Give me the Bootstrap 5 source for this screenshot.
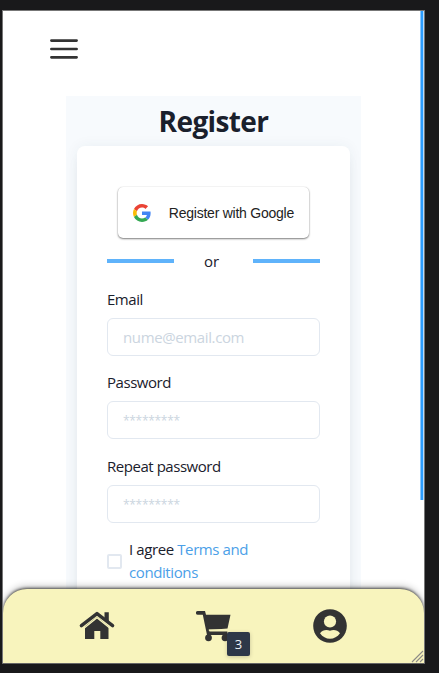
<!DOCTYPE html>
<html lang="en">
<head>
<meta charset="utf-8">
<meta name="viewport" content="width=device-width, initial-scale=1">
<title>Register</title>
<link href="https://cdn.jsdelivr.net/npm/bootstrap@5.3.0/dist/css/bootstrap.min.css" rel="stylesheet">
<style>
html,body{height:100%;overflow:hidden}
body{background:#19191b;font-family:"Open Sans","Noto Sans",sans-serif;font-size:15px;line-height:22.5px;color:#1a202c;padding:10px 14px 9px 2px}
.screen{height:654px;border:1px solid #777;border-bottom-color:#666}
.scroll-thumb{width:4px;height:489px;background:#2b9dff;border-left:1px solid #8cc8ff;border-right:1px solid #b5dcff;top:0;right:0}
.menu-btn{margin:28px 0 0 47px;width:28px;height:20px}
.panel{width:295px;height:620px;margin:37px 0 0 63px;background:#f7fafd}
.panel h1{font-size:28px;line-height:50px;font-weight:700;letter-spacing:-.62px}
.form-box{width:273px;height:560px;padding:41px 30px 0;border-radius:8px;box-shadow:0 10px 15px -3px rgba(0,0,0,.06),0 0 14px rgba(40,60,80,.06)}
.google-btn{width:191px;height:51px;border-radius:5px;font:14px "Liberation Sans",Arial,sans-serif;color:#222;box-shadow:0 1px 2px rgba(0,0,0,.5),0 0 1px rgba(0,0,0,.2);padding:0 15px}
.google-btn span{letter-spacing:-.24px;white-space:nowrap}
.divider{height:22px;margin-top:12px}
.divider i{width:67px;height:4px;background:#5fb3fb}
.divider span{margin-right:4px;letter-spacing:-.2px}
.form-label{margin:0 0 8px;height:22px;line-height:22px;letter-spacing:-.46px}
.field{margin-top:15.6px}
.form-control{height:38px;font-size:15px;padding:4px 15px 4px;border:1px solid #e2e8f0;border-radius:6px;letter-spacing:-.38px}
.form-control::placeholder{color:#cbd5e0;opacity:1}
.form-control[type=password]{font-size:12px;letter-spacing:-.3px;padding-bottom:3px}
.terms{margin-top:15.5px}
.form-check-input{width:15px;height:15px;margin:0;border:2px solid #e2e8f0;border-radius:2px!important}
.terms label{width:140px;margin-left:7px;letter-spacing:-.4px;line-height:23px}
.terms a{color:#4ba0e8}
.tabbar{height:74px;background:#f8f4bd;border-radius:24px 24px 0 0;box-shadow:0 -1px 3px rgba(0,0,0,.65),0 -3px 7px rgba(0,0,0,.22);color:#333}
.tabbar a{color:#333}
.tabbar svg{display:block}
.home-tab{margin-left:76px}
.cart-tab{margin-left:81px}
.user-tab{margin-left:81px}
.count{left:31px;top:22px;width:23px;height:24px;border-radius:2px;background:#2d3748;color:#edf2f7;font-size:13px;line-height:24px;box-shadow:0 1px 4px rgba(0,0,0,.2)}
.grip{right:0;bottom:0}
</style>
<script src="https://cdn.jsdelivr.net/npm/bootstrap@5.3.0/dist/js/bootstrap.bundle.min.js"></script>
</head>
<body>
<main class="screen bg-white position-relative overflow-hidden">
  <div class="d-flex flex-column align-items-start">
    <button class="menu-btn btn p-0 border-0 d-flex" aria-label="Menu">
      <svg width="28" height="20" viewBox="0 0 28 20"><path d="M1.4 1.6h25.2M1.4 10h25.2M1.4 18.3h25.2" stroke="#333" stroke-width="2.7" stroke-linecap="round"/></svg>
    </button>
    <section class="panel d-flex flex-column align-items-center">
      <h1 class="m-0 text-center">Register</h1>
      <form class="form-box bg-white">
        <button type="button" class="google-btn bg-white border-0 d-flex align-items-center mx-auto">
          <svg width="18" height="18" viewBox="0 0 48 48" class="flex-shrink-0"><path fill="#EA4335" d="M24 9.5c3.54 0 6.71 1.22 9.21 3.6l6.85-6.85C35.9 2.38 30.47 0 24 0 14.62 0 6.51 5.38 2.56 13.22l7.98 6.19C12.43 13.72 17.74 9.5 24 9.5z"/><path fill="#4285F4" d="M46.98 24.55c0-1.57-.15-3.09-.38-4.55H24v9.02h12.94c-.58 2.96-2.26 5.48-4.78 7.18l7.73 6c4.51-4.18 7.09-10.36 7.09-17.65z"/><path fill="#FBBC05" d="M10.53 28.59c-.48-1.45-.76-2.99-.76-4.59s.27-3.14.76-4.59l-7.98-6.19C.92 16.46 0 20.12 0 24s.92 7.54 2.56 10.78l7.97-6.19z"/><path fill="#34A853" d="M24 48c6.48 0 11.93-2.13 15.89-5.81l-7.73-6c-2.15 1.45-4.92 2.3-8.16 2.3-6.26 0-11.57-4.22-13.47-9.91l-7.98 6.19C6.51 42.62 14.62 48 24 48z"/></svg>
          <span class="ms-auto">Register with Google</span>
        </button>
        <div class="divider d-flex align-items-center justify-content-between"><i></i><span>or</span><i></i></div>
        <div class="field"><label class="form-label d-block" for="em">Email</label><input id="em" type="email" class="form-control" placeholder="nume@email.com"></div>
        <div class="field"><label class="form-label d-block" for="pw">Password</label><input id="pw" type="password" class="form-control" placeholder="*********"></div>
        <div class="field"><label class="form-label d-block" for="rp">Repeat password</label><input id="rp" type="password" class="form-control" placeholder="*********"></div>
        <div class="terms d-flex align-items-center"><input id="ag" type="checkbox" class="form-check-input flex-shrink-0"><label for="ag">I agree <a href="#" class="text-decoration-none"><span>Terms and</span> <span>conditions</span></a></label></div>
      </form>
    </section>
  </div>
  <div class="scroll-thumb position-absolute"></div>
  <nav class="tabbar position-absolute bottom-0 start-0 end-0 d-flex align-items-center">
    <a href="#" class="home-tab" aria-label="Home"><svg width="36" height="30" viewBox="0 0 36 30"><path fill="#333" d="M6 15.5 18 5.8l11.5 9.7V28H21.3v-8h-6v8H6z"/><path d="M2.4 14.6 18 2.6l15.6 12" fill="none" stroke="#333" stroke-width="3.4" stroke-linecap="round" stroke-linejoin="round"/><path d="M5 17.2 18 6.7l13 10.5" fill="none" stroke="#f8f4bd" stroke-width="1.3"/><path fill="#333" d="M25.5 1.2h4.3v10.2l-4.3-3.3z"/></svg></a>
    <a href="#" class="cart-tab position-relative text-decoration-none" aria-label="Cart"><svg width="36" height="32" viewBox="0 0 36 32"><path fill="#333" d="M1.800 1h7.200l1 3.700H34.500l-3 13.800L13 20l.5 1.500h17.800v3.500H11L6.800 4.700H1.800A1.800 1.800 0 0 1 1.800 1z"/><path d="M12.800 20h18.500" stroke="#f8f4bd" stroke-width="1.300"/><circle cx="12.500" cy="27.800" r="3.400" fill="#333"/><circle cx="29" cy="27.800" r="3.400" fill="#333"/></svg><span class="count position-absolute text-center">3</span></a>
    <a href="#" class="user-tab" aria-label="Account"><svg width="34" height="34" viewBox="0 0 34 34"><circle cx="17" cy="17" r="16.8" fill="#333"/><circle cx="17" cy="12.5" r="6.1" fill="#f8f4bd"/><path d="M7 24.2c2.5-3.200 6.500-3.800 10-2.400 3.500-1.400 7.500-.8 10 2.400-2.600 3.600-6 5.500-10 5.500S9.600 27.800 7 24.200z" fill="#f8f4bd"/></svg></a>
    <svg class="grip position-absolute" width="13" height="13" viewBox="0 0 13 13"><path d="M1 12 12 1M5 12l7-7M9 12l3-3" stroke="#8d8b87" stroke-width="1.1"/></svg>
  </nav>
</main>
</body>
</html>
